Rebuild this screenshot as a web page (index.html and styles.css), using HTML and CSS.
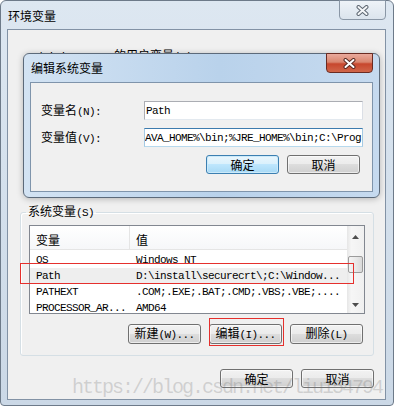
FILE: index.html
```html
<!DOCTYPE html>
<html lang="zh-CN">

<head>
    <meta charset="UTF-8" />
    <title>环境变量</title>
    <link rel="stylesheet" href="styles.css">
</head>

<body>
    <div class="window">
        <div class="titlebar">
            <span class="title">环境变量</span>
            <button class="close close-inactive">
                <svg width="13" height="11" viewBox="0 0 13 11">
                    <path d="M2.5 2 L10.5 9 M10.5 2 L2.5 9" stroke="#5d6772" stroke-width="4" stroke-linecap="round" />
                    <path d="M2.5 2 L10.5 9 M10.5 2 L2.5 9" stroke="#f4f6f8" stroke-width="2" stroke-linecap="round" />
                </svg>
            </button>
        </div>

        <div class="client">
            <div class="user-box">
                <div class="user-label"><span class="key">Administrator </span>的用户变量<span class="key">(U)</span></div>
            </div>

            <fieldset class="group">
                <legend>系统变量<span class="key">(S)</span></legend>
                <div class="listview">
                    <div class="list-main">
                        <div class="list-head">
                            <div class="col1">变量</div>
                            <div class="col2">值</div>
                        </div>
                        <div class="list-body">
                            <div class="row">
                                <div class="col1">OS</div>
                                <div class="col2">Windows_NT</div>
                            </div>
                            <div class="row selected">
                                <div class="col1">Path</div>
                                <div class="col2">D:\install\securecrt\;C:\Window...</div>
                            </div>
                            <div class="row">
                                <div class="col1">PATHEXT</div>
                                <div class="col2">.COM;.EXE;.BAT;.CMD;.VBS;.VBE;....</div>
                            </div>
                            <div class="row">
                                <div class="col1">PROCESSOR_AR...</div>
                                <div class="col2">AMD64</div>
                            </div>
                        </div>
                    </div>
                    <div class="scrollbar">
                        <div class="sb-btn sb-up">
                            <svg width="7" height="4" viewBox="0 0 7 4"><path d="M0 4 L3.5 0 L7 4 Z" fill="#4d4d4d" /></svg>
                        </div>
                        <div class="sb-track"><div class="sb-thumb"></div></div>
                        <div class="sb-btn">
                            <svg width="7" height="4" viewBox="0 0 7 4"><path d="M0 0 L7 0 L3.5 4 Z" fill="#4d4d4d" /></svg>
                        </div>
                    </div>
                </div>
                <div class="btn-row group-buttons">
                    <button class="btn">新建<span class="key">(W)...</span></button>
                    <button class="btn">编辑<span class="key">(I)...</span></button>
                    <button class="btn">删除<span class="key">(L)</span></button>
                </div>
            </fieldset>

            <div class="btn-row footer">
                <button class="btn btn-small">确定</button>
                <button class="btn btn-small">取消</button>
            </div>
        </div>
    </div>

    <!-- edit dialog on top of the main window -->
    <div class="dialog">
        <div class="dialog-bar">
            <span class="dialog-title">编辑系统变量</span>
            <button class="close close-red">
                <svg width="13" height="11" viewBox="0 0 13 11">
                    <path d="M2.5 2 L10.5 9 M10.5 2 L2.5 9" stroke="#5a2a22" stroke-width="4" stroke-linecap="round" />
                    <path d="M2.5 2 L10.5 9 M10.5 2 L2.5 9" stroke="#fff" stroke-width="2" stroke-linecap="round" />
                </svg>
            </button>
        </div>
        <div class="dialog-client">
            <div class="field-row">
                <label class="field-label">变量名<span class="key">(N):</span></label>
                <input class="field" type="text" value="Path">
            </div>
            <div class="field-row">
                <label class="field-label">变量值<span class="key">(V):</span></label>
                <input class="field focused" type="text" value="AVA_HOME%\bin;%JRE_HOME%\bin;C:\Program Files">
            </div>
            <div class="btn-row dialog-buttons">
                <button class="btn btn-small default">确定</button>
                <button class="btn btn-small">取消</button>
            </div>
        </div>
    </div>

    <div class="mark mark-path"></div>
    <div class="mark mark-edit"></div>
    <div class="watermark">https://blog.csdn.net/liu154794</div>
</body>

</html>
```

FILE: styles.css
```css
* {
    box-sizing: border-box;
}

body {
    margin: 0;
    position: relative;
    width: 394px;
    height: 406px;
    overflow: hidden;
    background: #fff;
    font-family: "Noto Sans CJK SC", sans-serif;
    font-size: 12px;
    line-height: 12px;
    color: #000;
}

.key {
    font-family: "Liberation Mono", monospace;
    font-size: 11px;
    letter-spacing: -0.6px;
}

/* main window */

.window {
    width: 394px;
    height: 406px;
    display: flex;
    flex-direction: column;
    padding: 0 7px 5px 6px;
    border: 1px solid #6d7a89;
    border-radius: 6px 6px 4px 4px;
    background: linear-gradient(to bottom, #dde7f1, #d5e1ed 40%, #cbd8e6);
}

.titlebar {
    height: 28px;
    display: flex;
    justify-content: space-between;
    align-items: flex-start;
}

.title {
    margin: 8px 0 0 1px;
    line-height: 14px;
}

.close {
    width: 47px;
    height: 20px;
    margin-top: -1px;
    padding: 0;
    display: flex;
    align-items: center;
    justify-content: center;
    border: 1px solid #8a97a6;
    border-radius: 0 0 4px 4px;
}

.close-inactive {
    background: linear-gradient(#eef3f8, #dbe4ed);
}

.close-red {
    border-color: #6a2b22;
    background: linear-gradient(#eaaa9c, #d9866f 45%, #c7472d 55%, #d0664a);
}

.client {
    flex: 1;
    display: flex;
    flex-direction: column;
    border: 1px solid #8292a5;
    background: #f0f0f0;
}

.user-box {
    height: 175px;
    padding: 19px 0 0 22px;
}

/* system variables group */

.group {
    margin: 0 11px 0 12px;
    padding: 6px 8px 11px;
    min-width: 0;
    border: 1px solid #d5dfe5;
    border-radius: 3px;
    box-shadow: inset 1px 1px 0 #fff;
}

.group legend {
    margin-left: -3px;
    padding: 0 2px;
    line-height: 12px;
}

.listview {
    display: flex;
    height: 89px;
    border: 1px solid #828790;
    background: #fff;
}

.list-main {
    flex: 1;
    overflow: hidden;
}

.list-head {
    display: flex;
    height: 24px;
    border-bottom: 1px solid #e5e5e5;
    background: linear-gradient(#fff, #f6f7f9);
}

.list-head div {
    padding-top: 8px;
}

.list-head .col1 {
    border-right: 1px solid #e5e5e5;
}

.col1 {
    flex: none;
    width: 100px;
    padding-left: 6px;
    white-space: nowrap;
    overflow: hidden;
}

.col2 {
    flex: 1;
    padding-left: 6px;
    white-space: nowrap;
    overflow: hidden;
}

.list-body {
    padding-top: 2px;
}

.row {
    display: flex;
    height: 16px;
    line-height: 16px;
    font-family: "Liberation Mono", monospace;
    font-size: 11px;
    letter-spacing: -0.6px;
}

.row.selected {
    background: #eeeeee;
}

.scrollbar {
    width: 17px;
    display: flex;
    flex-direction: column;
    background: linear-gradient(90deg, #e6e6e6, #f6f6f6 25%, #f0f0f0);
}

.sb-btn {
    height: 17px;
    display: flex;
    align-items: center;
    justify-content: center;
}

.sb-up {
    height: 22px;
}

.sb-track {
    flex: 1;
    padding-top: 8px;
}

.sb-thumb {
    height: 17px;
    margin: 0 1px;
    border: 1px solid #9b9b9b;
    border-radius: 2px;
    background: linear-gradient(90deg, #f4f4f4, #e9e9e9 50%, #d9d9d9);
}

/* buttons */

.btn-row {
    display: flex;
    justify-content: flex-end;
    gap: 8px;
}

.group-buttons {
    margin: 10px 2px 0 0;
}

.footer {
    margin: 13px 11px 0 0;
}

.btn {
    width: 73px;
    height: 20px;
    padding: 0;
    border: 1px solid #707070;
    border-radius: 3px;
    background: linear-gradient(#f2f2f2, #ebebeb 49%, #dddddd 50%, #cfcfcf);
    box-shadow: inset 0 0 0 1px rgba(255, 255, 255, 0.6);
    font: inherit;
    color: #000;
}

.btn-small {
    height: 19px;
}

.btn.default {
    border-color: #3c7fb1;
    background: linear-gradient(#eaf6fd, #d9f0fc 49%, #bee6fd 50%, #a7d9f5);
    box-shadow: inset 0 0 0 1px #cbeafa;
}

/* edit dialog */

.dialog {
    position: absolute;
    left: 23px;
    top: 53px;
    width: 357px;
    height: 145px;
    display: flex;
    flex-direction: column;
    padding: 0 6px 5px;
    border: 1px solid #5c6a7a;
    border-radius: 6px;
    background: linear-gradient(90deg, #d3e3f3, #b9d2eb 55%, #c6daef);
    box-shadow: 0 1px 6px rgba(0, 0, 0, 0.25);
}

.dialog-bar {
    height: 28px;
    display: flex;
    justify-content: space-between;
    align-items: flex-start;
}

.dialog-title {
    margin: 7px 0 0 1px;
    line-height: 14px;
}

.dialog-client {
    flex: 1;
    padding: 18px 9px 0 10px;
    border: 1px solid #7f94ab;
    background: #f0f0f0;
}

.field-row {
    display: flex;
    align-items: center;
    height: 19px;
    margin-bottom: 8px;
}

.field-label {
    flex: none;
    width: 103px;
}

.field {
    flex: 1;
    min-width: 0;
    height: 19px;
    padding: 0 1px;
    border: 1px solid #abadb3;
    border-bottom-color: #e3e9ef;
    border-right-color: #dbdfe6;
    background: #fff;
    outline: none;
    font-family: "Liberation Mono", monospace;
    font-size: 11px;
    letter-spacing: -0.6px;
    color: #000;
}

.field.focused {
    padding: 0;
    border-color: #3d7bad #a4c9e3 #b7d9ed #a4c9e3;
}

.dialog-buttons {
    margin: 4px 3px 0 0;
}

/* screenshot annotations */

.mark {
    position: absolute;
    border: 1px solid #e5302d;
}

.mark-path {
    left: 20px;
    top: 263px;
    width: 334px;
    height: 21px;
}

.mark-edit {
    left: 209px;
    top: 318px;
    width: 75px;
    height: 28px;
}

.watermark {
    position: absolute;
    left: 72px;
    top: 376px;
    font-family: "Liberation Mono", monospace;
    font-size: 20px;
    line-height: 24px;
    letter-spacing: -2px;
    white-space: nowrap;
    color: rgba(110, 110, 110, 0.25);
    pointer-events: none;
}
```
